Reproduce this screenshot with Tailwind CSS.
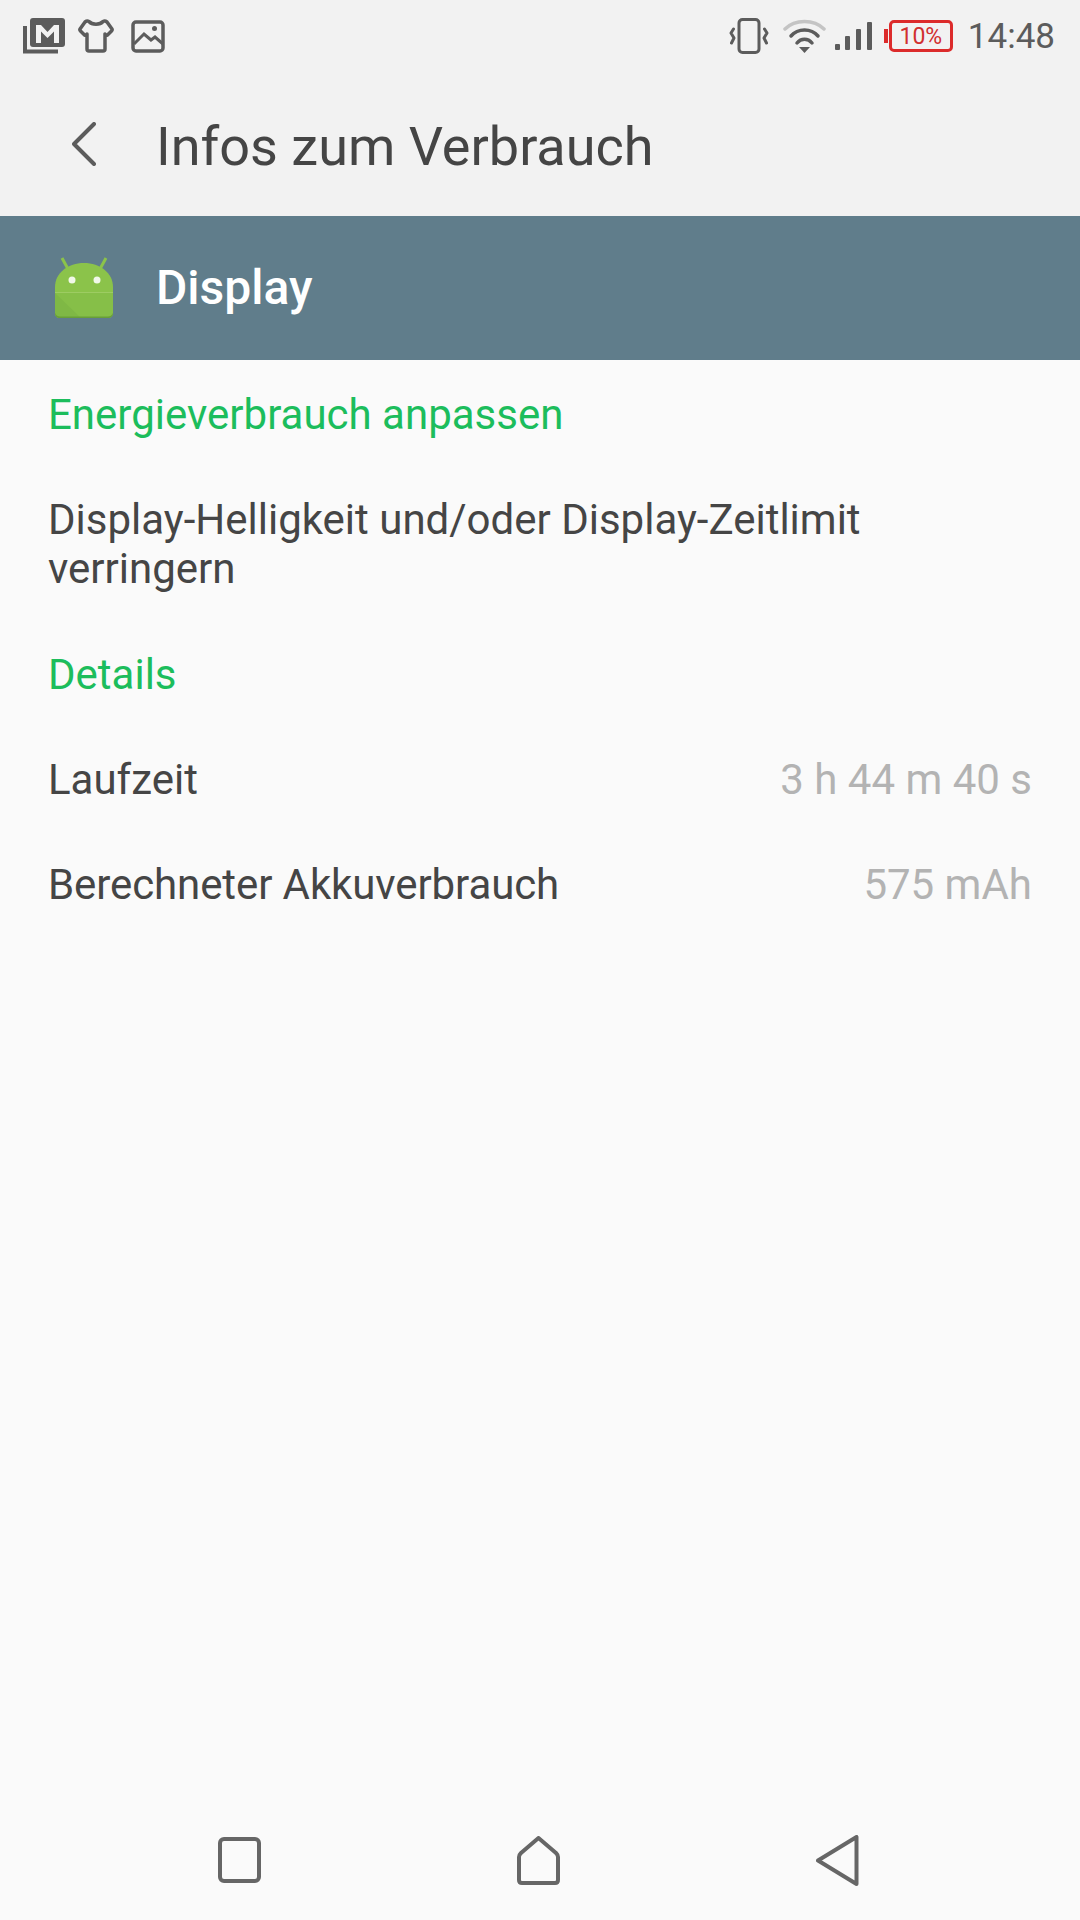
<!DOCTYPE html>
<html lang="de">
<head>
  <meta charset="UTF-8" />
  <meta name="viewport" content="width=device-width, initial-scale=1.0">
  <title>Infos zum Verbrauch</title>
  <script src="https://cdn.jsdelivr.net/npm/@tailwindcss/browser@4"></script>
</head>
<body class="bg-[#fafafa] font-['Roboto',sans-serif]">
<div class="w-[1080px] h-[1920px] flex flex-col overflow-hidden">

  <!-- Status bar -->
  <div class="h-[72px] bg-[#f2f2f2] flex items-center pl-[23px] pr-[25px] text-[#5c5c5c]">
    <svg class="w-[42px] h-[36px]" viewBox="0 0 42 36" fill="none">
      <path d="M2 8V33.500H35" stroke="#5c5c5c" stroke-width="4"/>
      <rect x="7" y="0" width="35" height="29" rx="3" fill="#5c5c5c"/>
      <path d="M13 25V7H18L24.500 14L31 7H36V25H31V13.500L24.500 20L18 13.500V25Z" fill="#f2f2f2"/>
    </svg>
    <svg class="w-[36px] h-[34px] ml-[13px]" viewBox="0 0 36 34" fill="none">
      <path d="M11 2.500C14 6 22 6 25 2.500Q27 1.500 29 3L34 10Q34.500 11 33.500 12L29.500 16Q28 16.500 27 15V30Q27 32 25 32H11Q9 32 9 30V15Q8 16.500 6.500 16L2.500 12Q1.500 11 2 10L7 3Q9 1.500 11 2.500Z" stroke="#5c5c5c" stroke-width="3.500" stroke-linejoin="round"/>
    </svg>
    <svg class="w-[34px] h-[33px] ml-[17px]" viewBox="0 0 34 33" fill="none">
      <rect x="2" y="2" width="30" height="29" rx="3" stroke="#5c5c5c" stroke-width="3.500"/>
      <path d="M3 24L13 14L20 20L24 17L32 24" stroke="#5c5c5c" stroke-width="3"/>
      <circle cx="23.500" cy="8.500" r="2.500" fill="#5c5c5c"/>
    </svg>

    <svg class="w-[40px] h-[36px] ml-auto" viewBox="0 0 40 36" fill="none">
      <rect x="10" y="1.500" width="20" height="33" rx="3.500" stroke="#5c5c5c" stroke-width="3"/>
      <path d="M4.500 11L2 15L5 20L2.500 25M35.500 11L38 15L35 20L37.500 25" stroke="#5c5c5c" stroke-width="3" stroke-linecap="round" stroke-linejoin="round"/>
    </svg>
    <svg class="w-[43px] h-[34px] ml-[14px]" viewBox="0 0 43 34" fill="none">
      <path d="M2 10C12 0 31 0 41 10" stroke="#c4c4c4" stroke-width="3.500" stroke-linecap="round"/>
      <path d="M8 17C15 9 28 9 35 17" stroke="#5c5c5c" stroke-width="3.500" stroke-linecap="round"/>
      <path d="M14 24C18 19 25 19 29 24" stroke="#5c5c5c" stroke-width="3.500" stroke-linecap="round"/>
      <path d="M16 28H27L21.500 34Z" fill="#5c5c5c"/>
    </svg>
    <svg class="w-[38px] h-[30px] ml-[8px]" viewBox="0 0 38 30" fill="#5c5c5c">
      <rect x="1" y="23" width="5" height="6" rx="1"/>
      <rect x="11" y="15" width="5" height="14" rx="1"/>
      <rect x="22" y="8" width="5" height="21" rx="1"/>
      <rect x="33" y="1" width="5" height="28" rx="1"/>
    </svg>
    <div class="ml-[12px] flex items-center">
      <div class="w-[4px] h-[14px] bg-[#dc2b2b]"></div>
      <div class="ml-[1px] w-[64px] h-[32px] border-[3.5px] border-[#dc2b2b] rounded-[5px] flex items-center justify-center text-[#d12f2f] text-[23px] leading-none">10%</div>
    </div>
    <span class="ml-[15px] text-[35px] leading-none">14:48</span>
  </div>

  <!-- Toolbar -->
  <div class="h-[144px] bg-[#f2f2f2] flex items-center pl-[72px]">
    <svg class="w-[24px] h-[44px]" viewBox="0 0 24 44" fill="none">
      <path d="M22 2L2 22L22 42" stroke="#5c5c5c" stroke-width="4" stroke-linecap="round" stroke-linejoin="round"/>
    </svg>
    <h1 class="ml-[60px] mt-[5px] text-[54px] leading-none text-[#454545]">Infos zum Verbrauch</h1>
  </div>

  <!-- App header -->
  <div class="h-[144px] bg-[#607d8b] flex items-center pl-[54px]">
    <svg class="w-[60px] h-[62px] -mt-[2px]" viewBox="0 0 60 62">
      <path d="M8 2L14 13M52 2L46 13" stroke="#8bc34a" stroke-width="3"/>
      <path d="M1 37V31C1 17 14 7 30 7S59 17 59 31V37Z" fill="#8bc34a"/>
      <path d="M1 36H59V57C59 60 57 62 54 62H6C3 62 1 60 1 57Z" fill="#86bf48"/>
      <path d="M1 37L27 62H6C3 62 1 60 1 57Z" fill="#7fb845"/>
      <path d="M6 60.500H54C56 60.500 58 59.500 59 57C59 60 57 62 54 62H6C3 62 1 60 1 57C2 59.500 4 60.500 6 60.500Z" fill="#689f38"/>
      <path d="M1 36H59V36.800H1Z" fill="#a5d06b"/>
      <circle cx="18" cy="24" r="3.500" fill="#f1f8e9"/>
      <circle cx="43" cy="24" r="3.500" fill="#f1f8e9"/>
    </svg>
    <span class="ml-[42px] text-[48px] font-medium leading-none text-white">Display</span>
  </div>

  <!-- Content -->
  <div class="h-[110px] px-[48px] flex items-center text-[42px] leading-none text-[#1cbd5c]">Energieverbrauch anpassen</div>
  <p class="px-[48px] pt-[25px] pb-[29px] text-[42px] leading-[49px] text-[#454545]">Display-Helligkeit und/oder Display-Zeitlimit<br>verringern</p>
  <div class="h-[106px] px-[48px] flex items-center text-[42px] leading-none text-[#1cbd5c]">Details</div>
  <div class="h-[104px] px-[48px] flex items-center justify-between text-[42px] leading-none">
    <span class="text-[#454545]">Laufzeit</span>
    <span class="text-[#b3b3b3]">3 h 44 m 40 s</span>
  </div>
  <div class="h-[106px] px-[48px] flex items-center justify-between text-[42px] leading-none">
    <span class="text-[#454545] tracking-[-0.1px]">Berechneter Akkuverbrauch</span>
    <span class="text-[#b3b3b3]">575 mAh</span>
  </div>

  <!-- Navigation bar -->
  <div class="mt-auto h-[120px] pl-[218px] flex items-center gap-[256px]">
    <svg class="w-[43px] h-[46px]" viewBox="0 0 43 46" fill="none">
      <rect x="2" y="2" width="39" height="42" rx="4" stroke="#666" stroke-width="4"/>
    </svg>
    <svg class="w-[43px] h-[49px]" viewBox="0 0 43 49" fill="none">
      <path d="M21.500 2L39 17Q41 19 41 21V44Q41 47 38 47H5Q2 47 2 44V21Q2 19 4 17Z" stroke="#666" stroke-width="4" stroke-linejoin="round"/>
    </svg>
    <svg class="w-[43px] h-[51px]" viewBox="0 0 43 51" fill="none">
      <path d="M40.500 2V49L2 25.500Z" stroke="#666" stroke-width="4" stroke-linejoin="round"/>
    </svg>
  </div>

</div>
</body>
</html>
